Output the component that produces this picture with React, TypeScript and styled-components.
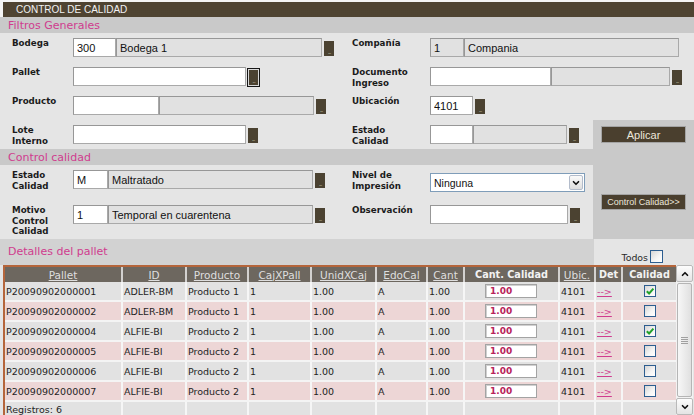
import React from "react";
import styled, { createGlobalStyle, css } from "styled-components";
import { ChevronDown, ChevronUp } from "lucide-react";

const GlobalStyle = createGlobalStyle`
  html, body { margin: 0; padding: 0; background: #e5e5e5; }
  body { font-family: "DejaVu Sans", Verdana, sans-serif; }
  * { box-sizing: border-box; }
`;

const PINK = "#d03c8e";

const Page = styled.div`
  width: 694px;
  height: 415px;
  overflow: hidden;
  background: #e5e5e5;
  display: flex;
  flex-direction: column;
`;

// --- cabecera ---
const TitleWrap = styled.div`
  flex: none;
  height: 17px;
  padding: 2px 0 0 3px;
  background: #f4f4f4;
`;

const TitleBar = styled.div`
  height: 15px;
  padding-left: 13px;
  background-color: #3a3123;
  background-image: radial-gradient(circle, #5a4f3b 0.6px, transparent 0.9px);
  background-size: 2px 2px;
  color: #f2f2f2;
  font: 10px/15px "Liberation Sans", Arial, sans-serif;
`;

const Band = styled.div`
  flex: none;
  height: 16px;
  padding: 1px 0 0 8px;
  background: #c9c9c9;
  color: ${PINK};
  font-size: 11px;
  line-height: 15px;
`;

// --- formulario ---
const FormGrid = styled.div<{ $rows: string }>`
  flex: none;
  display: grid;
  padding-left: 12px;
  grid-template-columns: 61px 279px 78px 163px 1fr;
  grid-template-rows: ${(p) => p.$rows};
  background: #e5e5e5;
`;

const FieldLabel = styled.div`
  align-self: start;
  margin-top: 5px;
  color: #1b1b1b;
  font-size: 8.7px;
  font-weight: bold;
  line-height: 10.5px;
`;

const Field = styled.div<{ $span?: number; $offset?: number }>`
  display: flex;
  align-self: start;
  margin-top: ${(p) => p.$offset ?? 5}px;
  ${(p) => p.$span && css`grid-column: span ${p.$span};`}
`;

const TextBox = styled.input<{ $w: number; $ro?: boolean }>`
  width: ${(p) => p.$w}px;
  height: 19px;
  margin: 0;
  padding: 0 3px;
  border: 1px solid #a9a9a9;
  border-top-color: #979797;
  border-left-color: #979797;
  background: ${(p) => (p.$ro ? "#e1e1e1" : "#fff")};
  color: #111;
  font: 11px "Liberation Sans", Arial, sans-serif;
  outline: none;
`;

const Lookup = styled.button<{ $focused?: boolean }>`
  align-self: flex-end;
  width: 10px;
  height: 15px;
  margin: 0 0 1px 2px;
  padding: 0 0 1px;
  border: none;
  overflow: hidden;
  background: #4b4231;
  color: #bdb6a0;
  font: 6px/1 "DejaVu Sans", sans-serif;
  letter-spacing: -1px;
  display: flex;
  align-items: flex-end;
  justify-content: center;
  ${(p) =>
    p.$focused &&
    css`
      width: 11px;
      height: 17px;
      margin-bottom: 0;
      border: 1px solid #d9d9d9;
      outline: 1px solid #161616;
    `}
`;

const Panel = styled.div<{ $area?: string }>`
  background: #c9c9c9;
  display: flex;
  align-items: center;
  justify-content: center;
  ${(p) => p.$area && css`grid-column: 5; grid-row: ${p.$area};`}
`;

const ActionButton = styled.button<{ $small?: boolean }>`
  width: 85px;
  height: ${(p) => (p.$small ? 16 : 17)}px;
  margin: 0;
  padding: 0;
  border: 1px solid #a4a4a4;
  background: #4a3f2e;
  color: #ece6da;
  font: ${(p) => (p.$small ? 9 : 11)}px "Liberation Sans", Arial, sans-serif;
`;

const SelectBox = styled.div`
  display: flex;
  width: 155px;
  height: 19px;
  border: 1px solid #7f9db9;
  background: #fff;
`;

const Select = styled.select`
  flex: 1;
  min-width: 0;
  appearance: none;
  border: none;
  background: transparent;
  padding: 0 3px;
  color: #111;
  font: 10.5px "Liberation Sans", Arial, sans-serif;
  outline: none;
`;

const SelectArrow = styled.span`
  width: 14px;
  margin: 1px;
  border: 1px solid #b3bccb;
  border-radius: 2px;
  background: linear-gradient(#fafafa, #dedede);
  display: flex;
  align-items: center;
  justify-content: center;
  color: #111;
`;

// --- detalle ---
const DetailBar = styled.div`
  flex: none;
  height: 26px;
  display: flex;
`;

const DetailTitle = styled.div`
  flex: 1;
  padding-left: 8px;
  background: #d2d2d2;
  color: ${PINK};
  font-size: 11px;
  line-height: 26px;
`;

const SelectAll = styled.label`
  width: 100px;
  display: flex;
  align-items: flex-end;
  justify-content: flex-end;
  gap: 2px;
  padding: 0 31px 2px 0;
  color: #2a2a2a;
  font-size: 9.4px;
  line-height: 11px;
`;

const CheckBox = styled.span<{ $size?: number }>`
  flex: none;
  width: ${(p) => p.$size ?? 12}px;
  height: ${(p) => p.$size ?? 12}px;
  border: 1px solid #2c5d8f;
  background: linear-gradient(135deg, #d6d6d6 0%, #f5f5f5 60%, #fff 100%);
  display: inline-flex;
  align-items: center;
  justify-content: center;
`;

const TableArea = styled.div`
  flex: 1;
  min-height: 0;
  display: flex;
  padding-left: 3px;
`;

const DataTable = styled.div`
  width: 673px;
  display: flex;
  flex-direction: column;
  border-left: 2px solid #b5653b;
  border-top: 2px solid #b5653b;
`;

const COLS = "116px 64px 62px 63px 65px 51px 37px 95px 36px 27px 55px";

type Tone = "head" | "gray" | "pink" | "foot";
const toneBg: Record<Tone, string> = {
  head: "#6d675f",
  gray: "#e2e2e2",
  pink: "#edd6d6",
  foot: "#e2e2e2",
};

const Row = styled.div<{ $tone: Tone }>`
  flex: none;
  display: grid;
  grid-template-columns: ${COLS};
  height: ${(p) => (p.$tone === "head" ? 15 : 20)}px;
  background: ${(p) => toneBg[p.$tone]};
  ${(p) => (p.$tone === "gray" || p.$tone === "pink") && css`border-bottom: 2px solid #f4f4f4;`}
  ${(p) => p.$tone === "foot" && css`flex: 1;`}
`;

const HeadCell = styled.div<{ $sort?: boolean }>`
  border-left: 2px solid rgba(255, 255, 255, 0.7);
  &:first-child { border-left: none; }
  display: flex;
  align-items: center;
  justify-content: center;
  white-space: nowrap;
  overflow: hidden;
  ${(p) =>
    p.$sort
      ? css`
          color: #dedede;
          font-size: 10.5px;
          text-decoration: underline;
        `
      : css`
          color: #f2f2f2;
          font-size: 9.7px;
          font-weight: bold;
        `}
`;

const Cell = styled.div<{ $center?: boolean }>`
  border-left: 2px solid #f6f6f6;
  &:first-child { border-left: none; }
  display: flex;
  align-items: center;
  justify-content: ${(p) => (p.$center ? "center" : "flex-start")};
  padding-left: 1px;
  color: #1e1e1e;
  font-size: 9.5px;
  white-space: nowrap;
  overflow: hidden;
`;

const FootCell = styled(Cell)`
  align-items: flex-start;
  padding-top: 2px;
  font-size: 9.5px;
`;

const QtyInput = styled.input`
  width: 52px;
  height: 14px;
  margin: 0 0 0 -2px;
  padding: 0 0 0 4px;
  border: 1px solid #a3a3a3;
  box-shadow: inset 1px 1px 0 #d0d0d0;
  background: #fff;
  color: #b8235a;
  font: bold 9px "DejaVu Sans", sans-serif;
  outline: none;
`;

const DetLink = styled.a`
  color: ${PINK};
  text-decoration: underline;
  font-size: 9.5px;
`;

const ScrollBar = styled.div`
  width: 17px;
  display: flex;
  flex-direction: column;
  background: #f2f2f2;
`;

const ScrollButton = styled.div`
  flex: none;
  height: 17px;
  border: 1px solid #b9b9b9;
  border-radius: 2px;
  background: linear-gradient(#fdfdfd, #e4e4e4);
  display: flex;
  align-items: center;
  justify-content: center;
  color: #111;
`;

const Track = styled.div`
  flex: 1;
  display: flex;
  padding: 1px 1px 1px;
`;

const Thumb = styled.div`
  flex: 1;
  border: 1px solid #b5b5b5;
  border-radius: 2px;
  background: linear-gradient(90deg, #f7f7f7, #e0e0e0);
  display: flex;
  align-items: center;
  justify-content: center;
`;

const Grip = styled.div`
  width: 7px;
  height: 7px;
  background: repeating-linear-gradient(#a0a0a0 0 1px, transparent 1px 2px);
`;

const Tick = () => (
  <svg width="10" height="10" viewBox="0 0 10 10">
    <path d="M1.8 5.2 L4.1 7.5 L8.4 2.6" fill="none" stroke="#1fa12a" strokeWidth="2" />
  </svg>
);

const rows = [
  { pallet: "P20090902000001", id: "ADLER-BM", prod: "Producto 1", ok: true },
  { pallet: "P20090902000002", id: "ADLER-BM", prod: "Producto 1", ok: false },
  { pallet: "P20090902000004", id: "ALFIE-BI", prod: "Producto 2", ok: true },
  { pallet: "P20090902000005", id: "ALFIE-BI", prod: "Producto 2", ok: false },
  { pallet: "P20090902000006", id: "ALFIE-BI", prod: "Producto 2", ok: false },
  { pallet: "P20090902000007", id: "ALFIE-BI", prod: "Producto 2", ok: false },
];

const headers: [string, boolean][] = [
  ["Pallet", true],
  ["ID", true],
  ["Producto", true],
  ["CajXPall", true],
  ["UnidXCaj", true],
  ["EdoCal", true],
  ["Cant", true],
  ["Cant. Calidad", false],
  ["Ubic.", true],
  ["Det", false],
  ["Calidad", false],
];

export default function App() {
  return (
    <Page>
      <GlobalStyle />
      <TitleWrap>
        <TitleBar>CONTROL DE CALIDAD</TitleBar>
      </TitleWrap>

      <Band>Filtros Generales</Band>
      <FormGrid $rows="29px 29px 29px 29px">
        <FieldLabel>Bodega</FieldLabel>
        <Field>
          <TextBox $w={43} defaultValue="300" />
          <TextBox $w={206} $ro readOnly defaultValue="Bodega 1" />
          <Lookup>...</Lookup>
        </Field>
        <FieldLabel>Compañía</FieldLabel>
        <Field $span={2}>
          <TextBox $w={34} $ro readOnly defaultValue="1" />
          <TextBox $w={215} $ro readOnly defaultValue="Compania" />
        </Field>

        <FieldLabel>Pallet</FieldLabel>
        <Field>
          <TextBox $w={173} />
          <Lookup $focused>...</Lookup>
        </Field>
        <FieldLabel>
          Documento
          <br />
          Ingreso
        </FieldLabel>
        <Field $span={2}>
          <TextBox $w={121} />
          <TextBox $w={119} $ro readOnly />
          <Lookup>...</Lookup>
        </Field>

        <FieldLabel>Producto</FieldLabel>
        <Field>
          <TextBox $w={86} />
          <TextBox $w={155} $ro readOnly />
          <Lookup>...</Lookup>
        </Field>
        <FieldLabel>Ubicación</FieldLabel>
        <Field $span={2}>
          <TextBox $w={43} defaultValue="4101" />
          <Lookup>...</Lookup>
        </Field>

        <FieldLabel>
          Lote
          <br />
          Interno
        </FieldLabel>
        <Field>
          <TextBox $w={173} />
          <Lookup>...</Lookup>
        </Field>
        <FieldLabel>
          Estado
          <br />
          Calidad
        </FieldLabel>
        <Field>
          <TextBox $w={43} />
          <TextBox $w={94} $ro readOnly />
          <Lookup>...</Lookup>
        </Field>
        <Panel>
          <ActionButton>Aplicar</ActionButton>
        </Panel>
      </FormGrid>

      <Band>Control calidad</Band>
      <FormGrid $rows="35px 39px">
        <Panel $area="1 / span 2">
          <ActionButton $small>Control Calidad&gt;&gt;</ActionButton>
        </Panel>
        <FieldLabel>
          Estado
          <br />
          Calidad
        </FieldLabel>
        <Field>
          <TextBox $w={35} defaultValue="M" />
          <TextBox $w={205} $ro readOnly defaultValue="Maltratado" />
          <Lookup>...</Lookup>
        </Field>
        <FieldLabel>
          Nivel de
          <br />
          Impresión
        </FieldLabel>
        <Field $offset={8}>
          <SelectBox>
            <Select defaultValue="Ninguna">
              <option>Ninguna</option>
            </Select>
            <SelectArrow>
              <ChevronDown size={10} strokeWidth={4} />
            </SelectArrow>
          </SelectBox>
        </Field>

        <FieldLabel>
          Motivo
          <br />
          Control
          <br />
          Calidad
        </FieldLabel>
        <Field>
          <TextBox $w={35} defaultValue="1" />
          <TextBox $w={205} $ro readOnly defaultValue="Temporal en cuarentena" />
          <Lookup>...</Lookup>
        </Field>
        <FieldLabel>Observación</FieldLabel>
        <Field>
          <TextBox $w={138} />
          <Lookup>...</Lookup>
        </Field>
      </FormGrid>

      <DetailBar>
        <DetailTitle>Detalles del pallet</DetailTitle>
        <SelectAll>
          Todos
          <CheckBox $size={13} />
        </SelectAll>
      </DetailBar>

      <TableArea>
        <DataTable>
          <Row $tone="head">
            {headers.map(([h, sort]) => (
              <HeadCell key={h} $sort={sort}>
                {h}
              </HeadCell>
            ))}
          </Row>
          {rows.map((r, i) => (
            <Row key={r.pallet} $tone={i % 2 ? "pink" : "gray"}>
              <Cell>{r.pallet}</Cell>
              <Cell>{r.id}</Cell>
              <Cell>{r.prod}</Cell>
              <Cell>1</Cell>
              <Cell>1.00</Cell>
              <Cell>A</Cell>
              <Cell>1.00</Cell>
              <Cell $center>
                <QtyInput defaultValue="1.00" />
              </Cell>
              <Cell>4101</Cell>
              <Cell>
                <DetLink href="#">--&gt;</DetLink>
              </Cell>
              <Cell $center>
                <CheckBox>{r.ok && <Tick />}</CheckBox>
              </Cell>
            </Row>
          ))}
          <Row $tone="foot">
            <FootCell>Registros: 6</FootCell>
            {headers.slice(1).map(([h]) => (
              <FootCell key={h} />
            ))}
          </Row>
        </DataTable>
        <ScrollBar>
          <ScrollButton>
            <ChevronUp size={10} strokeWidth={4} />
          </ScrollButton>
          <Track>
            <Thumb>
              <Grip />
            </Thumb>
          </Track>
          <ScrollButton>
            <ChevronDown size={10} strokeWidth={4} />
          </ScrollButton>
        </ScrollBar>
      </TableArea>
    </Page>
  );
}
